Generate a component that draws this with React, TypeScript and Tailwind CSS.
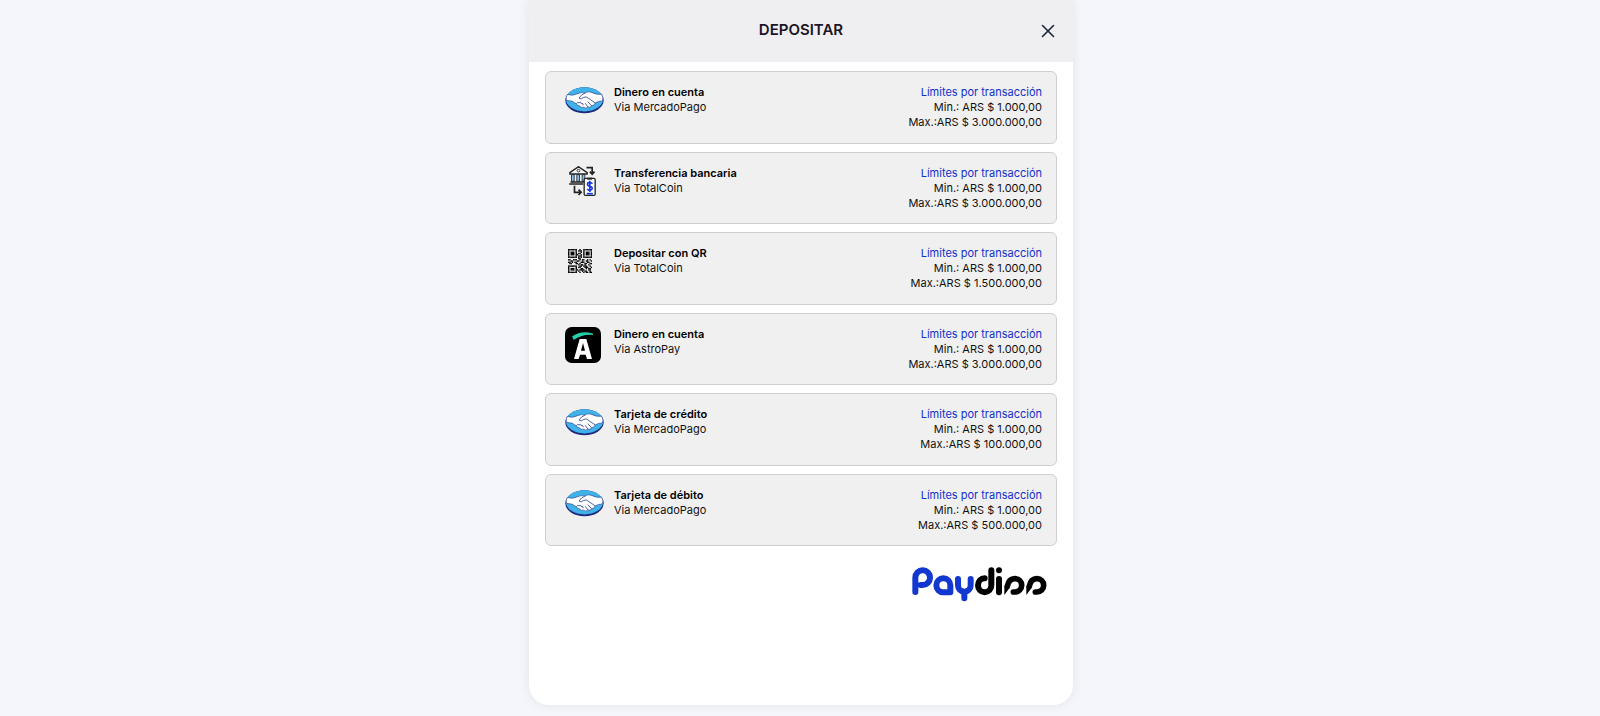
import { X } from "lucide-react";

const QR_ROWS = [
  "1111111001001111111",
  "1000001011101000001",
  "1011101000101011101",
  "1011101011001011101",
  "1011101100101011101",
  "1000001011101000001",
  "1111111010101111111",
  "0000000011000000000",
  "1100111001011001010",
  "0011000110010011001",
  "1101011000111001100",
  "0110001101000110011",
  "0000000010110100100",
  "1111111001101110010",
  "1000001011000111001",
  "1011101000110010110",
  "1011101101111000110",
  "1000001010010110010",
  "1111111001001011011",
];

function HandshakeIcon() {
  return (
    <svg viewBox="0 0 120 84" className="w-[39px] h-7 mt-px" aria-hidden="true">
      <ellipse cx="60" cy="43" rx="59" ry="40" fill="#1f2a7c" />
      <ellipse cx="60" cy="40" rx="57" ry="37" fill="#3fb2ea" />
      <path
        d="M7 25 Q24 31 40 22 Q52 17 61 21 Q70 14 80 18 Q97 27 113 24 Q119 37 115 45 Q103 45 93 51 Q90 60 82 60 Q78 66 71 64 Q64 70 58 64 Q48 67 45 60 Q37 61 35 53 Q28 52 24 46 L4 43 Q2 33 7 25Z"
        fill="#fff"
        stroke="#2b3f8f"
        strokeWidth="2"
      />
      <path
        d="M61 21 Q50 25 43 36 Q49 42 58 34 Q66 30 71 36 L93 51 M70 47 L82 60 M62 52 L71 64 M35 53 Q39 46 43 51 Q49 46 50 53 Q57 51 56 58"
        fill="none"
        stroke="#2b3f8f"
        strokeWidth="2.5"
      />
    </svg>
  );
}

function TransferIcon() {
  return (
    <svg viewBox="0 0 80 90" className="w-[27px] h-[30px] ml-1" fill="none" stroke="#222" strokeWidth="4" aria-hidden="true">
      <path d="M2 20 L28 2 L54 20 V24 H2Z" fill="#f4f4f4" />
      <circle cx="28" cy="14" r="4" strokeWidth="2.5" />
      <path d="M7 26 H15 V46 H7Z M23 26 H31 V46 H23Z M39 26 H47 V46 H39Z" fill="#8cc4f0" strokeWidth="2.5" />
      <path d="M4 48 H44 M0 54 H42" />
      <path d="M52 5 H69 V24 M62 17 L69 25 L76 17" strokeWidth="5" />
      <path d="M16 59 V79 H35 M28 71 L36 79 L28 87" strokeWidth="5" />
      <rect x="45" y="37" width="33" height="51" rx="4" fill="#fff" />
      <path d="M54 38 H69" strokeWidth="6" />
      <path d="M70 53 Q62 46 56 51 Q52 58 62 61 Q72 64 68 70 Q61 76 54 69 M62 44 V78" stroke="#1638e0" strokeWidth="5" />
      <path d="M53 83 H71" stroke="#1638e0" strokeWidth="5" />
    </svg>
  );
}

function QrIcon() {
  return (
    <svg viewBox="0 0 19 19" className="w-6 h-6 ml-[3px] mt-[3px]" aria-hidden="true">
      {QR_ROWS.map((row, y) =>
        row
          .split("")
          .map((cell, x) => (cell === "1" ? <rect key={`${x}-${y}`} x={x} y={y} width="1.1" height="1.1" fill="#000" /> : null)),
      )}
    </svg>
  );
}

function AstroIcon() {
  return (
    <svg viewBox="0 0 108 108" className="w-9 h-9" aria-hidden="true">
      <rect width="108" height="108" rx="20" fill="#000" />
      <path d="M24 29 Q50 11 84 22 Q52 19 27 36Z" fill="#25d0aa" stroke="#25d0aa" strokeWidth="4" />
      <path d="M44 36 H64 L81 96 H66 L62 83 H45 L41 96 H27Z M54 48 L48 71 H60Z" fill="#fff" fillRule="evenodd" />
    </svg>
  );
}

function PaydissLogo() {
  return (
    <svg viewBox="0 0 405 105" className="w-[135px] h-[35px]" fill="none" strokeWidth="18" strokeLinecap="round" strokeLinejoin="round" role="img" aria-label="Paydiss">
      <g stroke="#1238d0">
        <path d="M10 75 V32 A22 22 0 1 1 32 54 H26" />
        <path d="M115 76 H94 A21 21 0 1 1 115 55Z" />
        <path d="M138 36 V55 A19 19 0 0 0 176 55 V36 M157 76 V94" />
      </g>
      <g stroke="#000">
        <path d="M238 10 V55 A20 21 0 1 1 218 34" />
        <path d="M261 36 V76 M261 10 V10" />
        <path d="M286 58 Q290 35 309 35 A20 20 0 0 1 309 75 H304" strokeWidth="17" />
        <path d="M352 58 Q356 35 375 35 A20 20 0 0 1 375 75 H370" strokeWidth="17" />
      </g>
      <path d="M277 84 V56 L293 62 Z M343 84 V56 L359 62 Z" fill="#000" />
    </svg>
  );
}

const methods = [
  { title: "Dinero en cuenta", via: "MercadoPago", max: "3.000.000,00", icon: <HandshakeIcon /> },
  { title: "Transferencia bancaria", via: "TotalCoin", max: "3.000.000,00", icon: <TransferIcon /> },
  { title: "Depositar con QR", via: "TotalCoin", max: "1.500.000,00", icon: <QrIcon /> },
  { title: "Dinero en cuenta", via: "AstroPay", max: "3.000.000,00", icon: <AstroIcon /> },
  { title: "Tarjeta de crédito", via: "MercadoPago", max: "100.000,00", icon: <HandshakeIcon /> },
  { title: "Tarjeta de débito", via: "MercadoPago", max: "500.000,00", icon: <HandshakeIcon /> },
];

export default function App() {
  return (
    <div className="min-h-screen bg-[#f4f6fb] pb-[11px] pl-0.5 flex font-['Inter',sans-serif] text-[#111]">
      <main className="w-full max-w-[544px] mx-auto flex flex-col bg-white rounded-b-[20px] shadow-[0_0_12px_rgba(0,0,0,0.08)]">
        <header className="h-[62px] bg-[#efeff1] grid grid-cols-[1fr_auto_1fr] items-center px-[14px] text-[#1a1526]">
          <h1 className="col-start-2 pb-0.5 text-[15px] leading-5 font-semibold">DEPOSITAR</h1>
          <button type="button" aria-label="Cerrar" className="justify-self-end">
            <X size={22} strokeWidth={1.75} color="#1d2939" />
          </button>
        </header>

        {/* Métodos de pago */}
        <section className="px-4 pt-[9px]">
          <div className="grid auto-rows-fr gap-2 h-[475px]">
            {methods.map((m, i) => (
              <button
                key={i}
                type="button"
                className="flex items-start w-full pl-[13px] pr-[14px] pt-[13px] text-left text-[11px] leading-[15px] bg-[#f0f0f0] border border-[#cfcfcf] rounded-md"
              >
                <span className="w-[55px] shrink-0 pl-[6px]">{m.icon}</span>
                <span className="flex-1">
                  <span className="block font-semibold text-black">{m.title}</span>
                  <span className="block">Via {m.via}</span>
                </span>
                <span className="text-right">
                  <span className="block text-[#1231c8]">Límites por transacción</span>
                  <span className="block">Min.: ARS $ 1.000,00</span>
                  <span className="block">Max.:ARS $ {m.max}</span>
                </span>
              </button>
            ))}
          </div>
        </section>

        <footer className="flex justify-end pt-[21px] px-[26px]">
          <PaydissLogo />
        </footer>
      </main>
    </div>
  );
}
